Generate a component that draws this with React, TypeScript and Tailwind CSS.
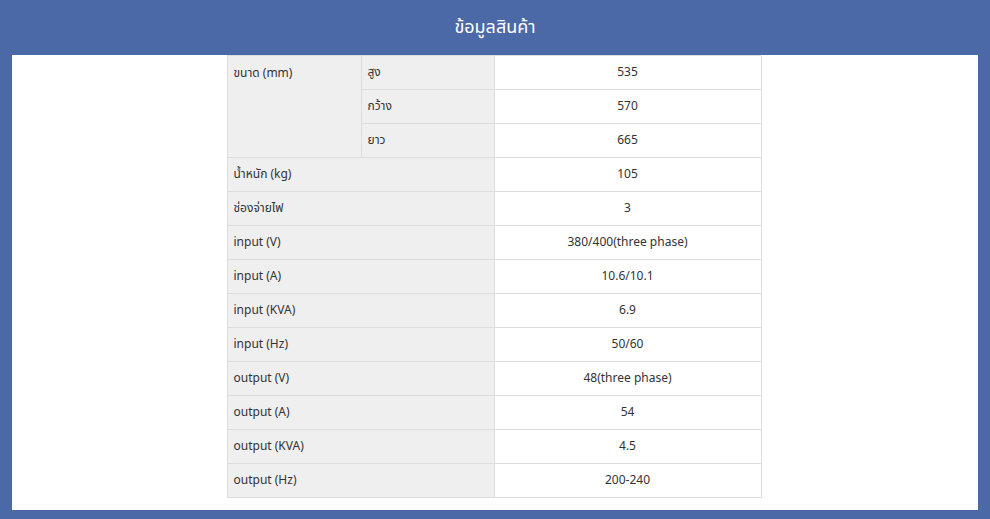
import React from "react";

const rows: [string, string][] = [
  ["น้ำหนัก (kg)", "105"],
  ["ช่องจ่ายไฟ", "3"],
  ["input (V)", "380/400(three phase)"],
  ["input (A)", "10.6/10.1"],
  ["input (KVA)", "6.9"],
  ["input (Hz)", "50/60"],
  ["output (V)", "48(three phase)"],
  ["output (A)", "54"],
  ["output (KVA)", "4.5"],
  ["output (Hz)", "200-240"],
];

const sub: [string, string][] = [
  ["สูง", "535"],
  ["กว้าง", "570"],
  ["ยาว", "665"],
];

export default function App() {
  const font = { fontFamily: '"Noto Sans Thai", "Noto Sans", "Liberation Sans", sans-serif' };
  return (
    <div className="w-[990px] h-[519px] bg-[#4a69a6] flex flex-col" style={font}>
      <div className="h-[55px] flex items-center justify-center text-white text-[18px]">
        ข้อมูลสินค้า
      </div>
      <div className="ml-[12px] w-[966px] h-[455px] bg-white flex justify-center pr-[3px]">
        <div className="w-[534px] grid grid-cols-[134px_133px_267px] auto-rows-[34px] border-l border-t border-[#dddddd] text-[12px] text-[#333] self-start">
          <div className="row-span-3 bg-[#efefef] border-r border-b border-[#dddddd] pl-[6px] pt-[8px]">
            ขนาด (mm)
          </div>
          {sub.map(([k, v], i) => (
            <React.Fragment key={i}>
              <div className="bg-[#efefef] border-r border-b border-[#dddddd] pl-[6px] pb-[2px] flex items-center">{k}</div>
              <div className="bg-white border-r border-b border-[#dddddd] pb-[2px] flex items-center justify-center">{v}</div>
            </React.Fragment>
          ))}
          {rows.map(([k, v], i) => (
            <React.Fragment key={i}>
              <div className="col-span-2 bg-[#efefef] border-r border-b border-[#dddddd] pl-[6px] pb-[2px] flex items-center">{k}</div>
              <div className="bg-white border-r border-b border-[#dddddd] pb-[2px] flex items-center justify-center">{v}</div>
            </React.Fragment>
          ))}
        </div>
      </div>
    </div>
  );
}
